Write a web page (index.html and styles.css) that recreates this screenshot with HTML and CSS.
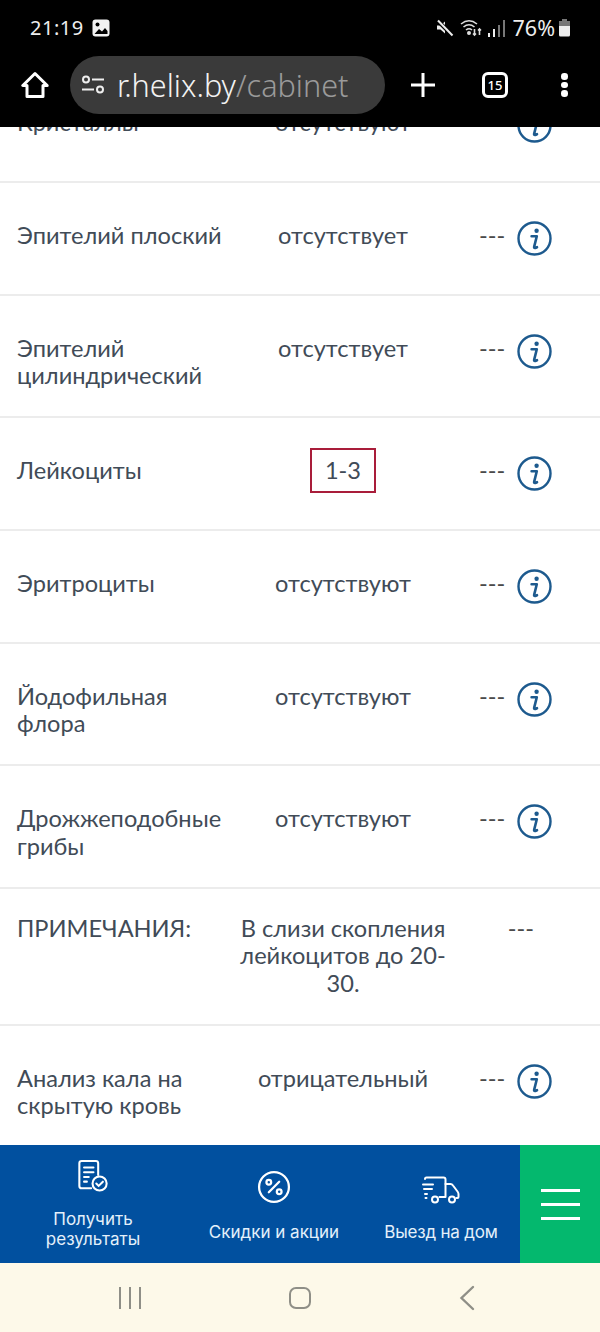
FILE: index.html
```html
<!DOCTYPE html>
<html lang="ru">
<head>
    <meta charset="UTF-8">
    <meta name="viewport" content="width=device-width, initial-scale=1.0">
    <title>Результаты</title>
    <link rel="stylesheet" href="styles.css">
</head>
<body>
    <svg class="defs" width="0" height="0">
        <symbol id="info" viewBox="0 0 35 35">
            <circle cx="17.5" cy="17.5" r="16" fill="none" stroke="#1d5a8e" stroke-width="2.4"/>
            <circle cx="19.6" cy="9.8" r="2.2" fill="#1d5a8e"/>
            <path d="M14.6 15.2h5.2l-2.6 10.4q-.4 1.6 1 1.4l1.8-.8" fill="none" stroke="#1d5a8e" stroke-width="2.6" stroke-linejoin="round" stroke-linecap="round"/>
        </symbol>
    </svg>

    <header class="top">
        <div class="status">
            <div class="status-left">
                <span class="time">21:19</span>
                <svg width="18" height="18" viewBox="0 0 18 18"><rect x="0.5" y="0.5" width="17" height="17" rx="3" fill="#f2f2f2"/><circle cx="5.5" cy="5.5" r="2" fill="#000"/><path d="M2.5 15l4.5-5 3 2.5 3-3.5 2.500 3v3z" fill="#000"/></svg>
            </div>
            <div class="status-right">
                <svg width="18" height="18" viewBox="0 0 18 18"><path d="M1 6.500h3.500L9 2.500v12L4.500 10.500H1z" fill="#eee"/><path d="M1.500 1.500l15 15" stroke="#000" stroke-width="4"/><path d="M2 1.500l14.500 15" stroke="#eee" stroke-width="2"/></svg>
                <svg width="24" height="20" viewBox="0 0 24 20" fill="none" stroke="#ddd" stroke-width="1.600"><path d="M1 6q8-6.500 16 0M3.500 9q5.500-4.500 11 0M6 12q3-2.500 6 0"/><circle cx="9" cy="15" r="1.200" fill="#ddd"/><path d="M14.500 11v6M13 15.500l1.500 1.500 1.500-1.500M19.500 17v-6M18 12.500l1.500-1.500 1.500 1.500"/></svg>
                <div class="signal"><i class="s1"></i><i class="s2"></i><i class="s3"></i><i class="s4"></i></div>
                <span class="pct">76%</span>
                <svg width="13" height="18" viewBox="0 0 13 18"><path d="M4 0h5v2H4z" fill="#777"/><path d="M1 2h11v5H1z" fill="#777"/><path d="M1 7h11v9q0 1.500-1.500 1.500h-8Q1 17.500 1 16z" fill="#eee"/></svg>
            </div>
        </div>
        <div class="toolbar">
            <svg class="home" width="28" height="28" viewBox="0 0 28 28" fill="none" stroke="#fff" stroke-width="3" stroke-linejoin="round"><path d="M14 2.500L1.800 14.500h4.200v11h16v-11h4.200z"/></svg>
            <div class="url">
                <svg width="24" height="20" viewBox="0 0 24 20" fill="none" stroke="#eee" stroke-width="2"><circle cx="5" cy="4.500" r="3"/><path d="M11 4.500h12M1 14.500h12"/><circle cx="19" cy="14.500" r="3"/></svg>
                <span class="url-text">r.helix.by<span class="url-path">/cabinet</span></span>
            </div>
            <svg class="plus" width="24" height="24" viewBox="0 0 24 24" stroke="#fff" stroke-width="3"><path d="M12 0v24M0 12h24"/></svg>
            <div class="tabs">15</div>
            <div class="dots"><i></i><i></i><i></i></div>
        </div>
    </header>

    <main class="content">
        <div class="table">
            <div class="row has-icon">
                <div class="name">Кристаллы</div>
                <div class="value">отсутствуют</div>
                <div class="ref"><span>---</span><svg class="info"><use href="#info"/></svg></div>
            </div>
            <div class="row has-icon">
                <div class="name">Эпителий плоский</div>
                <div class="value">отсутствует</div>
                <div class="ref"><span>---</span><svg class="info"><use href="#info"/></svg></div>
            </div>
            <div class="row has-icon">
                <div class="name">Эпителий цилиндрический</div>
                <div class="value">отсутствует</div>
                <div class="ref"><span>---</span><svg class="info"><use href="#info"/></svg></div>
            </div>
            <div class="row has-icon">
                <div class="name">Лейкоциты</div>
                <div class="value"><span class="flag">1-3</span></div>
                <div class="ref"><span>---</span><svg class="info"><use href="#info"/></svg></div>
            </div>
            <div class="row has-icon">
                <div class="name">Эритроциты</div>
                <div class="value">отсутствуют</div>
                <div class="ref"><span>---</span><svg class="info"><use href="#info"/></svg></div>
            </div>
            <div class="row has-icon">
                <div class="name">Йодофильная флора</div>
                <div class="value">отсутствуют</div>
                <div class="ref"><span>---</span><svg class="info"><use href="#info"/></svg></div>
            </div>
            <div class="row has-icon">
                <div class="name">Дрожжеподобные грибы</div>
                <div class="value">отсутствуют</div>
                <div class="ref"><span>---</span><svg class="info"><use href="#info"/></svg></div>
            </div>
            <div class="row">
                <div class="name">ПРИМЕЧАНИЯ:</div>
                <div class="value">В слизи скопления лейкоцитов до 20-30.</div>
                <div class="ref"><span>---</span></div>
            </div>
            <div class="row has-icon">
                <div class="name">Анализ кала на скрытую кровь</div>
                <div class="value">отрицательный</div>
                <div class="ref"><span>---</span><svg class="info"><use href="#info"/></svg></div>
            </div>
        </div>
    </main>

    <nav class="nav">
        <a class="nav-item item-results">
            <svg width="32" height="34" viewBox="0 0 34 36" fill="none" stroke="#fff" stroke-width="2.200" stroke-linecap="round"><path d="M15 31H5q-2.500 0-2.500-2.500v-24Q2.500 2 5 2h15q2.500 0 2.500 2.500V17"/><path d="M7.500 9h10M7.500 14h10M7.500 19h5M7.500 24h3"/><circle cx="24" cy="26" r="7.500"/><path d="M20.500 26l2.500 2.500 4.500-4.500"/></svg>
            <span>Получить<br>результаты</span>
        </a>
        <a class="nav-item item-sales">
            <svg width="34" height="34" viewBox="0 0 36 36" fill="none" stroke="#fff" stroke-width="2.400"><circle cx="18" cy="18" r="15.800"/><path d="M23.500 12.500l-11 11" stroke-linecap="round"/><circle cx="12.500" cy="13" r="2.500"/><circle cx="23.500" cy="23" r="2.500"/></svg>
            <span>Скидки и акции</span>
        </a>
        <a class="nav-item item-home">
            <svg width="38" height="28" viewBox="0 0 38 28" fill="none" stroke="#fff" stroke-width="2" stroke-linecap="round" stroke-linejoin="round"><path d="M3 3q0-1.500 1.500-1.500h17q2 0 2 2V21h-6"/><path d="M23.500 8h5q1.500 0 2.500 1.500l4.500 6q1 1.500 1 2.500v3q0 1-1 1h-1"/><path d="M1 8.500h10M2 13h8M3 18h2M3.500 22h1"/><circle cx="13" cy="23.500" r="3"/><circle cx="30" cy="23.500" r="3"/></svg>
            <span>Выезд на дом</span>
        </a>
        <button class="burger"><i></i><i></i><i></i></button>
    </nav>

    <footer class="sysbar">
        <div class="recent"><i></i><i></i><i></i></div>
        <div class="square"></div>
        <svg width="16" height="26" viewBox="0 0 16 26" fill="none" stroke="#8f8f87" stroke-width="2.400" stroke-linecap="round"><path d="M14 2L2.500 13 14 24"/></svg>
    </footer>
</body>
</html>
```

FILE: styles.css
```css
* { margin: 0; padding: 0; box-sizing: border-box; }
body { width: 600px; height: 1332px; display: flex; flex-direction: column; overflow: hidden; background-color: #fff; font-family: Lato, "Noto Sans", sans-serif; color: #414b57; }
.defs { position: absolute; }

/* phone + browser chrome */
.top { height: 127px; flex: none; background-color: #000; color: #eee; font-family: "Noto Sans", sans-serif; }
.status { height: 56px; padding: 18px 29px 0 30px; display: flex; justify-content: space-between; align-items: flex-start; }
.status-left, .status-right { display: flex; align-items: center; }
.status-left { gap: 8px; }
.time { font-size: 20px; line-height: 20px; letter-spacing: 0.5px; }
.status-right svg:first-child { margin-right: 6px; }
.signal { display: flex; align-items: flex-end; gap: 3px; height: 17px; margin: 0 8px 0 4px; }
.signal i { width: 2px; background-color: #777; }
.signal .s1 { height: 4px; background-color: #eee; }
.signal .s2 { height: 8px; background-color: #eee; }
.signal .s3 { height: 12px; }
.signal .s4 { height: 17px; }
.pct { font-size: 21.500px; line-height: 20px; margin-right: 3px; }
.toolbar { height: 58px; padding-left: 21px; display: flex; align-items: center; }
.home { flex: none; }
.url { width: 315px; height: 58px; margin-left: 21px; padding-left: 11px; flex: none; display: flex; align-items: center; gap: 12px; border-radius: 29px; background-color: #3a3a3a; }
.url-text { font-size: 30.600px; font-weight: 300; color: #f2f2f2; }
.url-path { color: #9a9a9a; }
.plus { margin-left: 26px; flex: none; }
.tabs { width: 26px; height: 26px; margin-left: 47px; flex: none; display: flex; align-items: center; justify-content: center; border: 3px solid #fff; border-radius: 6px; color: #fff; font-size: 13px; font-weight: 500; }
.dots { margin-left: 53px; display: flex; flex-direction: column; gap: 2px; }
.dots i { width: 6.500px; height: 6.500px; border-radius: 50%; background-color: #fff; }

/* results table */
.content { flex: 1; min-height: 0; overflow: hidden; }
.table { margin-top: -56.700px; }
.row { display: flex; padding: 26px 0 27.100px 17px; border-bottom: 2px solid #ececec; font-size: 23.600px; line-height: 27.300px; }
.row:last-child { border-bottom: none; }
.name { width: 223px; flex: none; padding-right: 4px; }
.value { width: 206px; flex: none; text-align: center; }
.flag { display: inline-block; width: 66px; height: 45px; margin-top: -9px; line-height: 41px; border: 2px solid #a91d3a; }
.ref { width: 84px; margin-left: 33px; flex: none; text-align: center; color: #4a4a4a; }
.has-icon .name, .has-icon .value { padding-top: 13px; }
.has-icon .ref { display: flex; gap: 12px; padding-top: 12px; height: 57.600px; text-align: left; }
.has-icon .ref span { padding-top: 1px; }
.info { width: 35px; height: 35px; flex: none; }

/* bottom menu */
.nav { height: 118px; flex: none; display: flex; background-color: #01509f; }
.nav-item { display: flex; flex-direction: column; align-items: center; justify-content: flex-end; color: #e4f0fb; font-size: 17px; line-height: 20px; text-align: center; font-family: Inter, "Noto Sans", sans-serif; }
.item-results { width: 186px; padding-bottom: 14px; gap: 16px; }
.item-sales { width: 176px; padding-bottom: 21px; gap: 18px; }
.item-home { width: 158px; padding-bottom: 21px; gap: 18px; letter-spacing: -0.200px; }
.burger { width: 80px; flex: none; display: flex; flex-direction: column; align-items: center; justify-content: center; gap: 11px; border: none; background-color: #04b86e; }
.burger i { width: 39px; height: 3px; background-color: #fff; }

/* android nav */
.sysbar { height: 69px; flex: none; padding: 0 125px 0 119px; display: flex; align-items: center; justify-content: space-between; background-color: #fdf9e9; }
.recent { display: flex; gap: 8px; }
.recent i { width: 2px; height: 22px; background-color: #8f8f87; }
.square { width: 22px; height: 22px; border: 2.400px solid #8f8f87; border-radius: 7px; }
```
